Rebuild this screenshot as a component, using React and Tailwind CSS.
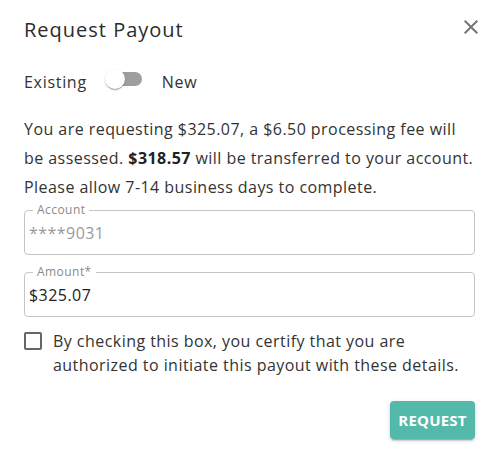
import { useState } from 'react'

function CloseIcon() {
  return (
    <svg className="w-6 h-6 text-[#757575]" viewBox="0 0 24 24" fill="currentColor">
      <path d="M19 6.41 17.59 5 12 10.59 6.41 5 5 6.41 10.59 12 5 17.59 6.41 19 12 13.41 17.59 19 19 17.59 13.41 12z" />
    </svg>
  )
}

function Switch({ on, onChange }) {
  return (
    <button onClick={() => onChange(!on)} className="relative w-[58px] h-[38px] shrink-0" aria-label="Existing or new">
      <span className="absolute left-3 top-3 w-[34px] h-[14px] rounded-full bg-[#9e9e9e]" />
      <span
        className={`absolute top-[9px] w-5 h-5 rounded-full bg-white shadow-[0_2px_1px_-1px_rgba(0,0,0,0.2),0_1px_1px_0_rgba(0,0,0,0.14),0_1px_3px_0_rgba(0,0,0,0.12)] ${on ? 'left-[29px]' : 'left-[9px]'}`}
      />
    </button>
  )
}

function OutlinedField({ label, value, disabled }) {
  return (
    <div className="relative h-[45px] rounded border border-[#c4c4c4] flex items-center pl-[4px]">
      <span className="absolute left-[8px] -top-[9px] px-1 bg-white text-[12px] leading-[16px] text-[#8a8a8a]">{label}</span>
      <span className={`text-[16px] ${disabled ? 'text-[#9a9a9a]' : 'text-[#222]'}`}>{value}</span>
    </div>
  )
}

export default function App() {
  const [isNew, setIsNew] = useState(false)
  const [checked, setChecked] = useState(false)

  return (
    <div className="w-[499px] h-[472px] bg-white px-6 text-[#333] font-['Open_Sans',sans-serif] tracking-[0.45px]">
      {/* Header */}
      <div className="flex items-start justify-between pt-4">
        <h2 className="text-[20px] leading-[28px] font-medium tracking-[1px] text-[#2b2b2b]">Request Payout</h2>
        <button className="-mr-2 -mt-[1px]" aria-label="Close"><CloseIcon /></button>
      </div>

      {/* Existing / New toggle */}
      <div className="flex items-center mt-[19px] h-[38px] text-[16px] tracking-[0.7px]">
        <span>Existing</span>
        <div className="ml-[9px] mr-2"><Switch on={isNew} onChange={setIsNew} /></div>
        <span>New</span>
      </div>

      <p className="mt-[14px] text-[16px] leading-[29px]">
        You are requesting $325.07, a $6.50 processing fee will
        <br />
        be assessed. <b className="font-bold text-[#222]">$318.57</b> will be transferred to your account.
        <br />
        Please allow 7-14 business days to complete.
      </p>

      <div className="mt-[8px] flex flex-col gap-[17px]">
        <OutlinedField label="Account" value="****9031" disabled />
        <OutlinedField label="Amount*" value="$325.07" />
      </div>

      <label className="mt-[12px] flex items-start gap-[11px] text-[16px] leading-[24px] cursor-pointer">
        <input type="checkbox" checked={checked} onChange={(e) => setChecked(e.target.checked)} className="sr-only" />
        <span className={`mt-[3px] w-[18px] h-[18px] shrink-0 rounded-[2px] border-2 ${checked ? 'bg-[#52b9ab] border-[#52b9ab]' : 'border-[#666]'}`} />
        <span>
          By checking this box, you certify that you are
          <br />
          authorized to initiate this payout with these details.
        </span>
      </label>

      <div className="flex justify-end mt-[24px]">
        <button className="h-[38px] w-[85px] rounded bg-[#52b9ab] text-white text-[15px] font-bold tracking-[0.2px] shadow-[0_3px_1px_-2px_rgba(0,0,0,0.2),0_2px_2px_0_rgba(0,0,0,0.14),0_1px_5px_0_rgba(0,0,0,0.12)]">
          REQUEST
        </button>
      </div>
    </div>
  )
}
